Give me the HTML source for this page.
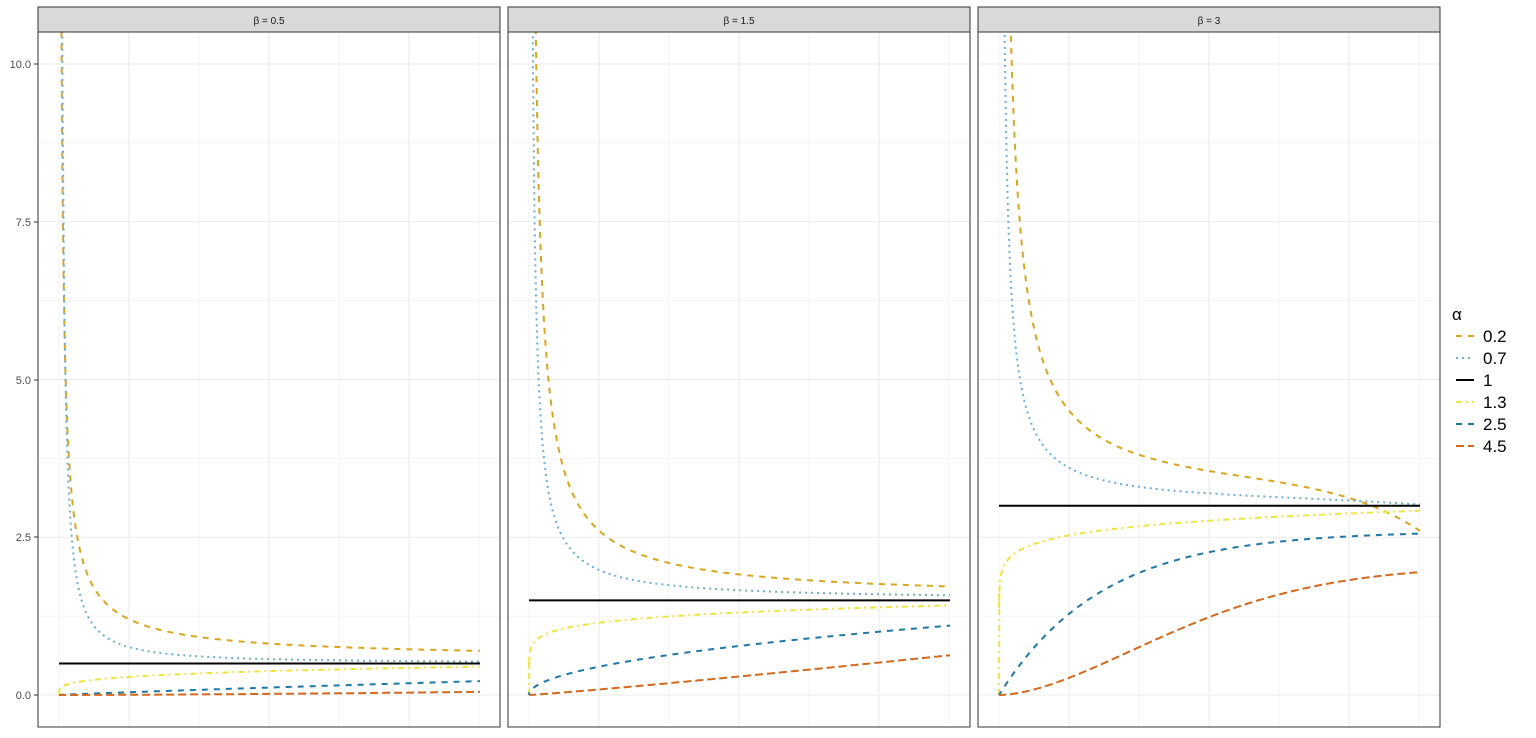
<!DOCTYPE html>
<html><head><meta charset="utf-8"><style>
html,body{margin:0;padding:0;background:#fff;width:1536px;height:738px;overflow:hidden}
svg text{font-family:"Liberation Sans",sans-serif}
</style></head><body>
<svg id="s" width="1536" height="738" xmlns="http://www.w3.org/2000/svg">
<rect width="1536" height="738" fill="#fff"/>
<g id="g"></g>
<g font-size="11" fill="#4d4d4d" text-anchor="end">
<text x="31" y="699">0.0</text><text x="31" y="541">2.5</text><text x="31" y="384">5.0</text><text x="31" y="226">7.5</text><text x="31" y="68">10.0</text>
</g>
<g stroke="#333" stroke-width="1"><line x1="34" x2="38" y1="695" y2="695"/><line x1="34" x2="38" y1="537" y2="537"/><line x1="34" x2="38" y1="380" y2="380"/><line x1="34" x2="38" y1="222" y2="222"/><line x1="34" x2="38" y1="64" y2="64"/></g>
<text x="1452" y="320" font-size="17" fill="#000">α</text>
<g font-size="17" fill="#000">
<text x="1483" y="342">0.2</text><text x="1483" y="364">0.7</text><text x="1483" y="386">1</text><text x="1483" y="408">1.3</text><text x="1483" y="430">2.5</text><text x="1483" y="452">4.5</text>
</g>
<g stroke-width="2" fill="none">
<line x1="1456" x2="1474" y1="336" y2="336" stroke="#DAA520" stroke-dasharray="6 6"/>
<line x1="1456" x2="1474" y1="358" y2="358" stroke="#6BAED6" stroke-dasharray="2 4"/>
<line x1="1456" x2="1474" y1="380" y2="380" stroke="#000"/>
<line x1="1456" x2="1474" y1="402" y2="402" stroke="#F0E442" stroke-dasharray="6 4 2 4"/>
<line x1="1456" x2="1474" y1="424" y2="424" stroke="#1F78A4" stroke-dasharray="6 6"/>
<line x1="1456" x2="1474" y1="446" y2="446" stroke="#D2691E" stroke-dasharray="8 4"/>
</g>
</svg>
<script>
var g=document.getElementById('g'),NS='http://www.w3.org/2000/svg';
function el(t,a){var e=document.createElementNS(NS,t);for(var k in a)e.setAttribute(k,a[k]);return e;}
var panels=[38,508,978],betas=['0.5','1.5','3'];
function Y(v){return 695-v*63.1;}
var st=[
 {c:'#DAA520',d:'6 6'},{c:'#6BAED6',d:'2 4'},{c:'#000',d:''},{c:'#F0E442',d:'6 4 2 4'},{c:'#1F78A4',d:'6 6'},{c:'#D2691E',d:'8 4'}];
var F=[
 [u=>0.55+0.15*Math.pow(u,-0.818), u=>0.5+0.03*Math.pow(u,-1.2), u=>0.5, u=>0.45*Math.pow(u,0.25), u=>0.22*Math.pow(u,0.9), u=>0.05*Math.pow(u,1.5)],
 [u=>1.5+0.22*Math.pow(u,-0.9), u=>1.5+0.08/u, u=>1.5, u=>1.42*Math.pow(u,0.12), u=>1.1*Math.pow(u,0.5), u=>0.63*Math.pow(u,1.1)],
 [u=>3+0.3*Math.pow(u,-0.9)-0.7*Math.pow(u,6), u=>3+0.1/u-0.08*Math.pow(u,4), u=>3, u=>2.92*Math.pow(u,0.08), u=>2.6*(1-Math.exp(-4.1*u)), u=>2.05*(1-Math.exp(-3*Math.pow(u,1.7)))]];
panels.forEach(function(x0,i){
 g.appendChild(el('rect',{x:x0,y:32,width:462,height:695,fill:'#fff'}));
 var y;
 for(var v=0;v<=11.25;v+=1.25){y=Y(v);if(y>32)g.appendChild(el('line',{x1:x0,x2:x0+462,y1:y,y2:y,stroke:'#ebebeb','stroke-width':(v%2.5==0?1.1:0.6)}));}
 for(var k=0;k<7;k++){var x=x0+21+70*k;if(x<x0+462)g.appendChild(el('line',{x1:x,x2:x,y1:32,y2:727,stroke:'#ebebeb','stroke-width':(k%2==1?1.1:0.6)}));}
 var cp=el('clipPath',{id:'c'+i});cp.appendChild(el('rect',{x:x0,y:32,width:462,height:695}));g.appendChild(cp);
 var gg=el('g',{'clip-path':'url(#c'+i+')'});g.appendChild(gg);
 F[i].forEach(function(f,j){
  var d='',xs=x0+21,w=421;
  if(j>=3) d='M'+xs+' '+Y(0)+' ';
  for(var n=0;n<=400;n++){var u=n==0?0.001:Math.pow(n/400,1.6);var v=f(u);var yy=Math.max(-50,Math.min(800,Y(v)));d+=((n||j>=3)?'L':'M')+(xs+u*w).toFixed(1)+' '+yy.toFixed(1);}
  var a={d:d,fill:'none',stroke:st[j].c,'stroke-width':2};if(st[j].d)a['stroke-dasharray']=st[j].d;
  gg.appendChild(el('path',a));
 });
 g.appendChild(el('rect',{x:x0,y:7,width:462,height:25,fill:'#d9d9d9',stroke:'#333','stroke-width':1}));
 var t=el('text',{x:x0+231,y:24,'font-size':10,fill:'#1a1a1a','text-anchor':'middle'});t.textContent='β = '+betas[i];g.appendChild(t);
 g.appendChild(el('rect',{x:x0,y:32,width:462,height:695,fill:'none',stroke:'#333','stroke-width':1}));
});
</script>
</body></html>
